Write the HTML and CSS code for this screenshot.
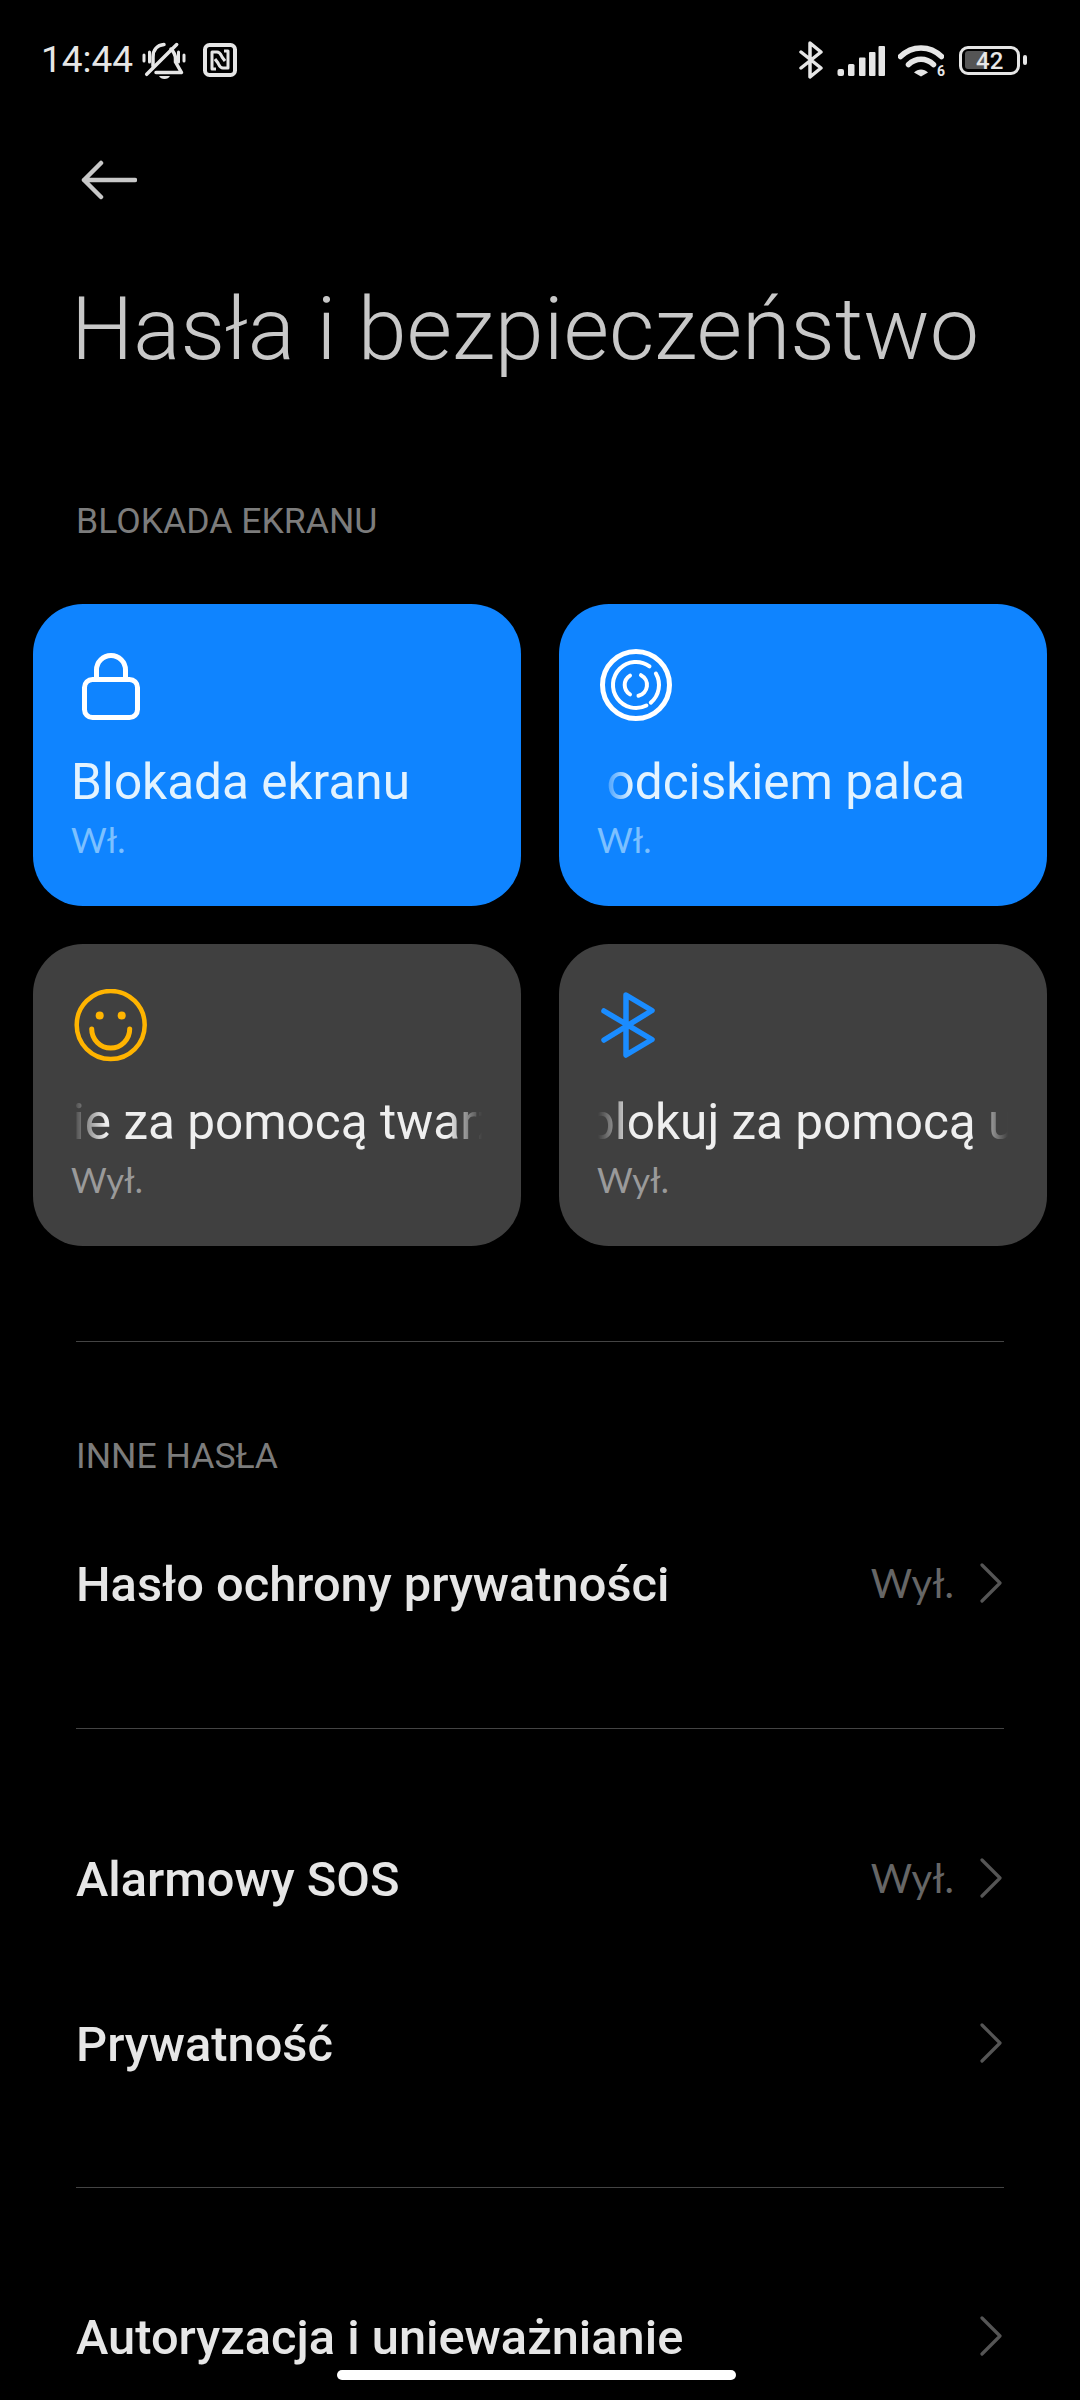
FILE: index.html
```html
<!DOCTYPE html>
<html lang="pl">
<head>
  <meta charset="UTF-8">
  <meta name="viewport" content="width=device-width, initial-scale=1.0">
  <title>Hasła i bezpieczeństwo</title>
  <link rel="stylesheet" href="styles.css">
</head>
<body>
  <div class="status">
    <div class="status-left">
      <span class="time">14:44</span>
      <svg class="ic-bell" viewBox="0 0 44 37" fill="none" stroke="#e6e6e6" stroke-width="3.500" stroke-linecap="round" stroke-linejoin="round">
        <path d="M4.700 32.300 34.700 2.500"/>
        <path d="M2 13v6M7.500 10v10M36.500 10v10M42 13v6" stroke-width="3"/>
        <path d="M11 24V15C11 8 15 3 22 2.500M29 7c3 3 4.500 6 4.500 10v3l6 10.500H14"/>
        <path d="M17 34h11c-1 2-3 3-5.500 3s-4.500-1-5.500-3z" fill="#e6e6e6" stroke="none"/>
      </svg>
      <svg class="ic-nfc" viewBox="0 0 34 34" fill="none" stroke="#e6e6e6" stroke-linejoin="round">
        <rect x="2" y="2" width="30" height="30" rx="4.500" stroke-width="4"/>
        <path d="M13 26H9V9h5c3 0 4 3 5 5l3 4" stroke-width="3"/>
        <path d="M21 8h4v17h-5c-3 0-4-3-5-5l-3-4" stroke-width="3"/>
      </svg>
    </div>
    <div class="status-right">
      <svg class="ic-bt" viewBox="0 0 24 38" fill="none" stroke="#e6e6e6" stroke-width="3.500" stroke-linecap="round" stroke-linejoin="round">
        <path d="M2 11 22 27 11 36V2l11 9L2 27"/>
      </svg>
      <svg class="ic-signal" viewBox="0 0 48 30" fill="#e6e6e6">
        <rect x="0.500" y="23" width="6.500" height="7" rx="2"/>
        <rect x="11" y="18" width="6.500" height="12" rx="1.500"/>
        <rect x="22" y="11.500" width="6.500" height="18.500" rx="1"/>
        <rect x="32" y="6" width="6.500" height="24" rx="1"/>
        <rect x="41.500" y="0" width="6.500" height="30" rx="1"/>
      </svg>
      <div class="wifi">
        <svg class="ic-wifi" viewBox="0 0 46 33" fill="none" stroke="#e6e6e6" stroke-width="5.500" stroke-linecap="round">
          <path d="M2.500 12.500C14 1 32 1 43.500 12.500"/>
          <path d="M10.500 20.500C18 13.500 28 13.500 35.500 20.500"/>
          <path d="M16 28.500C20 24.500 26 24.500 30 28.500L23 32.500Z" fill="#e6e6e6" stroke="none"/>
        </svg>
        <span class="wifi-six">6</span>
      </div>
      <div class="battery">
        <div class="battery-box">
          <div class="battery-fill"></div>
          <span class="battery-num">42</span>
        </div>
        <div class="battery-cap"></div>
      </div>
    </div>
  </div>

  <div class="back">
    <svg class="ic-back" viewBox="0 0 56 40" fill="none" stroke="#c8c8c8" stroke-width="4.500" stroke-linecap="round" stroke-linejoin="round">
      <path d="M54 20H3M20 3 3 20l17 17"/>
    </svg>
  </div>

  <h1 class="title">Hasła i bezpieczeństwo</h1>

  <div class="section first">BLOKADA EKRANU</div>

  <div class="cards">
    <div class="card on">
      <svg class="card-icon" viewBox="0 0 76 76" fill="none" stroke="#fff" stroke-width="5" stroke-linecap="round" stroke-linejoin="round">
        <rect x="12.500" y="30.500" width="53" height="38" rx="8"/>
        <path d="M24.500 29v-8a14.500 14.500 0 0 1 29 0v8"/>
      </svg>
      <div class="card-title"><span>Blokada ekranu</span></div>
      <div class="card-sub">Wł.</div>
    </div>
    <div class="card on">
      <svg class="card-icon" viewBox="0 0 76 76" fill="none" stroke="#fff" stroke-width="4" stroke-linecap="round">
        <circle cx="38" cy="36" r="33.500" stroke-width="5"/>
        <path d="M51.500 17.400A23 23 0 1 0 48.400 56.500"/>
        <path d="M57.900 24.500A23 23 0 0 1 52.800 53.600"/>
        <path d="M32 26.600A11 11 0 0 0 32 45.400"/>
        <path d="M43 26.200A11 11 0 0 1 40.500 46.700"/>
      </svg>
      <div class="card-title fade"><span class="scroll-finger">Odblokuj odciskiem palca</span></div>
      <div class="card-sub">Wł.</div>
    </div>
    <div class="card off">
      <svg class="card-icon" viewBox="0 0 76 76" fill="none" stroke="#ffb400" stroke-width="4.500" stroke-linecap="round">
        <circle cx="38.700" cy="36" r="34"/>
        <circle cx="27.700" cy="26.500" r="4" fill="#ffb400" stroke="none"/>
        <circle cx="49.700" cy="26.500" r="4" fill="#ffb400" stroke="none"/>
        <path d="M19.700 40a19 19 0 0 0 38 0" stroke-width="5"/>
      </svg>
      <div class="card-title fade"><span class="scroll-face">Odblokowanie za pomocą twarzy</span></div>
      <div class="card-sub">Wył.</div>
    </div>
    <div class="card off">
      <svg class="card-icon" viewBox="0 0 76 76" fill="none" stroke="#1a8cff" stroke-width="5.500" stroke-linecap="round" stroke-linejoin="round">
        <path d="M6 22 54 50.500 28 66V6L54 21.500 6 51"/>
      </svg>
      <div class="card-title fade"><span class="scroll-bt">Odblokuj za pomocą urządzenia Bluetooth</span></div>
      <div class="card-sub">Wył.</div>
    </div>
  </div>

  <div class="divider div-a"></div>
  <div class="section second">INNE HASŁA</div>

  <div class="row short">
    <span class="row-label">Hasło ochrony prywatności</span>
    <span class="row-value">Wył.</span>
    <svg class="chev" viewBox="0 0 22 40" fill="none" stroke="#555" stroke-width="3.200" stroke-linecap="round" stroke-linejoin="round"><path d="M2 2 20 20 2 38"/></svg>
  </div>

  <div class="divider div-b"></div>

  <div class="row">
    <span class="row-label">Alarmowy SOS</span>
    <span class="row-value">Wył.</span>
    <svg class="chev" viewBox="0 0 22 40" fill="none" stroke="#555" stroke-width="3.200" stroke-linecap="round" stroke-linejoin="round"><path d="M2 2 20 20 2 38"/></svg>
  </div>
  <div class="row">
    <span class="row-label">Prywatność</span>
    <svg class="chev" viewBox="0 0 22 40" fill="none" stroke="#555" stroke-width="3.200" stroke-linecap="round" stroke-linejoin="round"><path d="M2 2 20 20 2 38"/></svg>
  </div>

  <div class="divider div-c"></div>

  <div class="row">
    <span class="row-label">Autoryzacja i unieważnianie</span>
    <svg class="chev" viewBox="0 0 22 40" fill="none" stroke="#555" stroke-width="3.200" stroke-linecap="round" stroke-linejoin="round"><path d="M2 2 20 20 2 38"/></svg>
  </div>

  <div class="home-bar"></div>
</body>
</html>
```
FILE: styles.css
```css
html, body {
  margin: 0;
  padding: 0;
}
body {
  position: relative;
  width: 1080px;
  height: 2400px;
  overflow: hidden;
  background-color: #000;
  color: #e6e6e6;
  font-family: Roboto, "Liberation Sans", sans-serif;
}

/* status bar */
.status {
  height: 120px;
  padding: 0 53px 0 41px;
  display: flex;
  align-items: center;
  justify-content: space-between;
}
.status-left, .status-right {
  display: flex;
  align-items: center;
}
.time {
  font-size: 37px;
  font-weight: 400;
  line-height: 40px;
}
.ic-bell {
  width: 44px;
  height: 37px;
  margin-left: 9px;
}
.ic-nfc {
  width: 34px;
  height: 34px;
  margin-left: 17px;
}
.ic-bt {
  width: 24px;
  height: 38px;
}
.ic-signal {
  width: 48px;
  height: 30px;
  margin-left: 14px;
  margin-top: 2px;
}
.wifi {
  position: relative;
  width: 46px;
  height: 33px;
  margin-left: 13px;
}
.ic-wifi {
  display: block;
  width: 46px;
  height: 33px;
}
.wifi-six {
  position: absolute;
  right: -1px;
  bottom: -1px;
  font-size: 14px;
  font-weight: 700;
  line-height: 14px;
}
.battery {
  display: flex;
  align-items: center;
  margin-left: 15px;
}
.battery-box {
  position: relative;
  width: 55px;
  height: 23px;
  border: 3.5px solid #e6e6e6;
  border-radius: 9px;
}
.battery-fill {
  position: absolute;
  left: 3px;
  top: 2.5px;
  width: 21px;
  height: 18px;
  border-radius: 3px;
  background-color: #555;
}
.battery-num {
  position: absolute;
  left: 14px;
  top: 0;
  font-size: 24px;
  font-weight: 500;
  line-height: 24px;
}
.battery-cap {
  width: 4px;
  height: 10px;
  margin-left: 3px;
  border-radius: 2px;
  background-color: #e6e6e6;
}

/* header */
.back {
  height: 120px;
  padding-left: 81px;
  display: flex;
  align-items: center;
}
.ic-back {
  width: 56px;
  height: 40px;
}
.title {
  height: 178px;
  margin: 0;
  padding-left: 71px;
  font-size: 88px;
  font-weight: 300;
  line-height: 178px;
  color: #c8c8c8;
  white-space: nowrap;
}

.section {
  height: 50px;
  padding-left: 76px;
  padding-top: 1.500px;
  box-sizing: border-box;
  font-size: 35.600px;
  line-height: 50px;
  color: #7c7c7c;
}
.section.first {
  margin-top: 76px;
  margin-bottom: 60px;
}
.section.second {
  margin-top: 87px;
}

/* tiles */
.cards {
  margin-left: 33px;
  display: grid;
  grid-template-columns: 488px 488px;
  grid-auto-rows: 302px;
  gap: 38px;
}
.card {
  padding: 45px 38px 0;
  border-radius: 50px;
  min-width: 0;
}
.card.on {
  background-color: #0f84ff;
  color: #e3f3ff;
}
.card.off {
  background-color: #404040;
  color: #efefef;
}
.card-icon {
  display: block;
  width: 76px;
  height: 76px;
  margin-left: 1px;
}
.card-title {
  margin-top: 26px;
  width: 411px;
  overflow: hidden;
  font-size: 49.500px;
  line-height: 62px;
  white-space: nowrap;
}
.card-title.fade {
  -webkit-mask-image: linear-gradient(to right, transparent 1px, #000 35px, #000 377px, transparent 411px);
  mask-image: linear-gradient(to right, transparent 1px, #000 35px, #000 377px, transparent 411px);
}
.card-title span {
  display: inline-block;
}
.scroll-finger {
  margin-left: -197px;
}
.scroll-face {
  margin-left: -273px;
}
.scroll-bt {
  margin-left: -72px;
}
.card-sub {
  font-family: Lato, Roboto, sans-serif;
  font-size: 34.500px;
  line-height: 50px;
  margin-top: 2px;
}
.card.on .card-sub {
  color: #7cc0ff;
}
.card.off .card-sub {
  color: #9a9a9a;
}

.divider {
  height: 1px;
  margin: 0 76px;
  background-color: #444;
}
.div-a {
  margin-top: 95px;
}
.div-b {
  margin-top: 80px;
  margin-bottom: 66px;
}
.div-c {
  margin-top: 62px;
  margin-bottom: 65px;
}

/* list rows */
.row {
  height: 165px;
  padding: 0 78px 0 76px;
  display: flex;
  align-items: center;
}
.row.short {
  height: 130px;
  margin-top: 39px;
}
.row-label {
  flex: 1;
  padding-top: 3px;
  font-size: 48.800px;
  font-weight: 500;
  color: #e6e6e6;
  white-space: nowrap;
}
.row-value {
  font-family: Lato, Roboto, sans-serif;
  font-size: 40px;
  color: #666;
  margin-right: 26px;
}
.chev {
  width: 22px;
  height: 40px;
}

.home-bar {
  position: absolute;
  left: 337px;
  top: 2370px;
  width: 399px;
  height: 10px;
  border-radius: 5px;
  background-color: #fff;
}
```
